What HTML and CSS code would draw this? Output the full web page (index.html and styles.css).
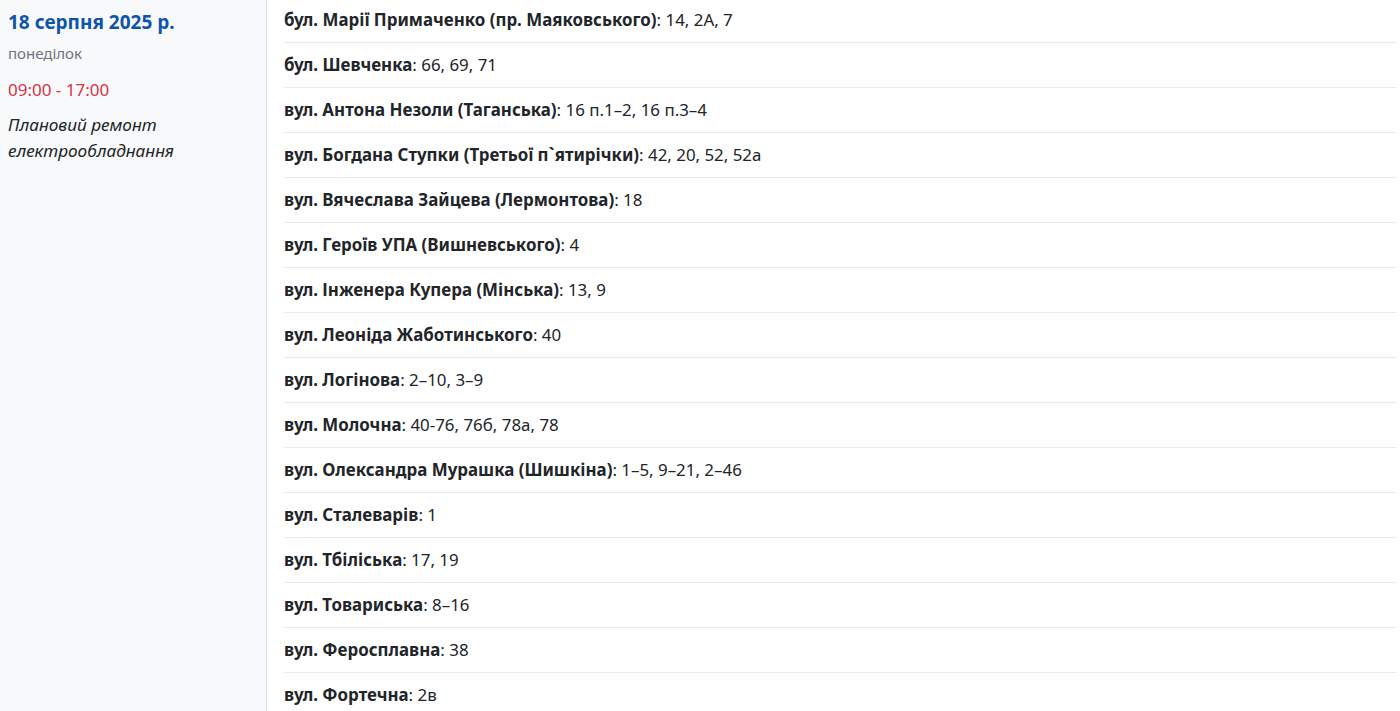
FILE: index.html
```html
<!DOCTYPE html>
<html lang="uk">
<head>
<meta charset="utf-8">
<title>Відключення</title>
<link rel="stylesheet" href="styles.css">
</head>
<body>
<div class="outage">
  <aside class="info">
    <div class="date">18 серпня 2025 р.</div>
    <div class="weekday">понеділок</div>
    <div class="time">09:00 - 17:00</div>
    <div class="reason">Плановий ремонт електрообладнання</div>
  </aside>
  <ul class="streets">
    <li><b>бул. Марії Примаченко (пр. Маяковського)</b>: 14, 2А, 7</li>
    <li><b>бул. Шевченка</b>: 66, 69, 71</li>
    <li><b>вул. Антона Незоли (Таганська)</b>: 16 п.1–2, 16 п.3–4</li>
    <li><b>вул. Богдана Ступки (Третьої п`ятирічки)</b>: 42, 20, 52, 52а</li>
    <li><b>вул. Вячеслава Зайцева (Лермонтова)</b>: 18</li>
    <li><b>вул. Героїв УПА (Вишневського)</b>: 4</li>
    <li><b>вул. Інженера Купера (Мінська)</b>: 13, 9</li>
    <li><b>вул. Леоніда Жаботинського</b>: 40</li>
    <li><b>вул. Логінова</b>: 2–10, 3–9</li>
    <li><b>вул. Молочна</b>: 40-76, 76б, 78а, 78</li>
    <li><b>вул. Олександра Мурашка (Шишкіна)</b>: 1–5, 9–21, 2–46</li>
    <li><b>вул. Сталеварів</b>: 1</li>
    <li><b>вул. Тбіліська</b>: 17, 19</li>
    <li><b>вул. Товариська</b>: 8–16</li>
    <li><b>вул. Феросплавна</b>: 38</li>
    <li><b>вул. Фортечна</b>: 2в</li>
  </ul>
</div>
</body>
</html>
```
FILE: styles.css
```css
html, body {
  margin: 0;
  padding: 0;
  background: #fff;
}
body {
  font-family: "Noto Sans", "Open Sans", sans-serif;
  color: #212529;
  overflow: hidden;
}
.outage {
  display: flex;
  margin-top: -2px;
  width: 1397px;
}
.info {
  width: 258px;
  flex: 0 0 258px;
  padding: 12px 0 0 8px;
  background: #f8f9fa;
  border-right: 1px solid #dee2e6;
}
.date {
  font-size: 19px;
  line-height: 24px;
  font-weight: 700;
  color: #0e55aa;
}
.weekday {
  margin-top: 9px;
  font-size: 15px;
  line-height: 20px;
  color: #6c757d;
}
.time {
  margin-top: 15px;
  font-size: 17px;
  line-height: 24px;
  color: #d63447;
}
.reason {
  margin-top: 10px;
  font-size: 17.2px;
  line-height: 26px;
  font-style: italic;
  padding-right: 20px;
}
.streets {
  list-style: none;
  margin: 0;
  padding: 0 0 0 17px;
  flex: 1;
}
.streets li {
  font-size: 16.9px;
  line-height: 24px;
  padding: 10px 0;
  border-bottom: 1px solid #e9ecef;
}
.streets b {
  font-weight: 700;
}
```
